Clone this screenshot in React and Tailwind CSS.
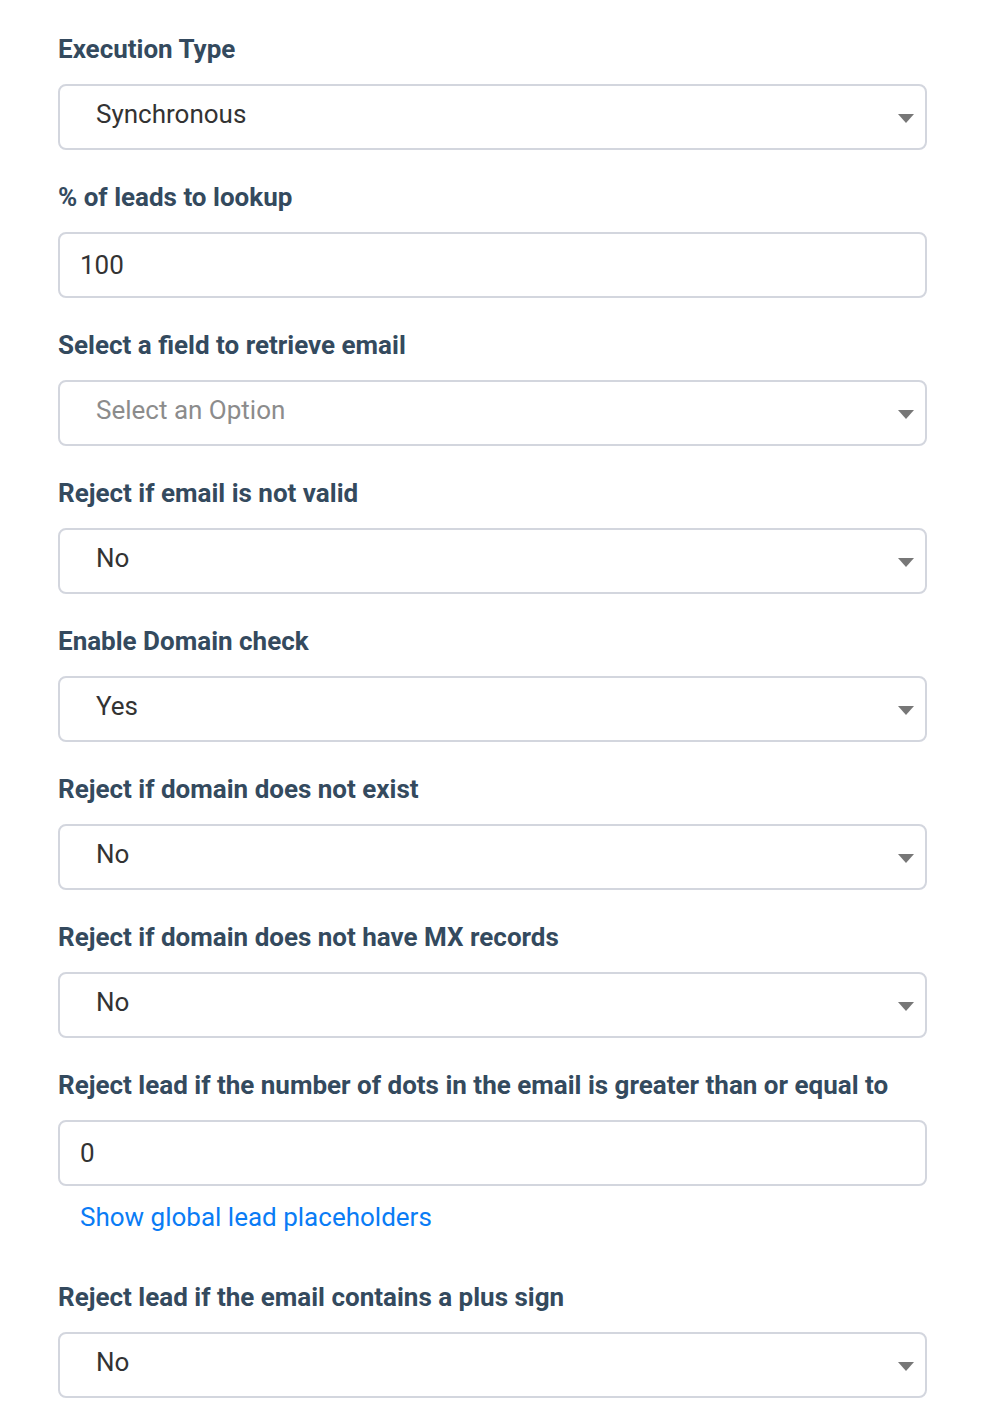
import React from 'react';

const fields = [
    { label: "Execution Type", type: "select", value: "Synchronous" },
    { label: "% of leads to lookup", type: "input", value: "100" },
    { label: "Select a field to retrieve email", type: "select", value: "Select an Option", placeholder: true },
    { label: "Reject if email is not valid", type: "select", value: "No" },
    { label: "Enable Domain check", type: "select", value: "Yes" },
    { label: "Reject if domain does not exist", type: "select", value: "No" },
    { label: "Reject if domain does not have MX records", type: "select", value: "No" },
    { label: "Reject lead if the number of dots in the email is greater than or equal to", type: "input", value: "0", link: "Show global lead placeholders" },
    { label: "Reject lead if the email contains a plus sign", type: "select", value: "No" },
];

function Field({ field }) {
    return (
        <div className="mb-[32px]">
            <label className="block text-[26px] leading-[30px] font-bold text-[#344a5e] mb-[20px]">{field.label}</label>
            {field.type === "select" ? (
                <div className="relative h-[66px] border-2 border-[#d3d6de] rounded-[8px] bg-white flex items-center pl-[36px] pr-[50px] pb-[6px]">
                    <span className={"text-[26px] " + (field.placeholder ? "text-[#8c8c8c]" : "text-[#333]")}>{field.value}</span>
                    <svg className="absolute right-[11px] top-[28px]" width="16" height="9" viewBox="0 0 16 9">
                        <path d="M0 0 L16 0 L8 9 Z" fill="#777" />
                    </svg>
                </div>
            ) : (
                <div className="h-[66px] border-2 border-[#d3d6de] rounded-[8px] bg-white flex items-center pl-[20px]">
                    <span className="text-[26px] text-[#333]">{field.value}</span>
                </div>
            )}
            {field.link && (
                <div className="pt-[14px] pb-[16px] pl-[22px] text-[26px] leading-[34px] text-[#0a7cf5]">{field.link}</div>
            )}
        </div>
    );
}

export default function App() {
    return (
        <div className="bg-white min-h-[1422px] pl-[58px] pr-[55px] pt-[34px]" style={{ fontFamily: "Roboto, 'Liberation Sans', sans-serif" }}>
            {fields.map((f, i) => <Field key={i} field={f} />)}
        </div>
    );
}
